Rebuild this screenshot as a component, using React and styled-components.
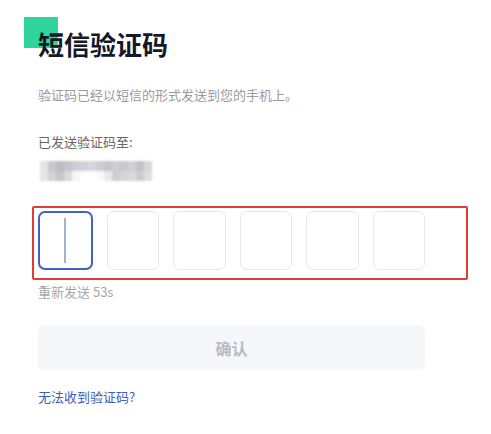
import styled, { createGlobalStyle } from 'styled-components';

const GlobalStyle = createGlobalStyle`
  body {
    margin: 0;
    background: #ffffff;
    font-family: "Noto Sans CJK SC", "Liberation Sans", sans-serif;
  }
`;

const mosaic = [
  ['#e4e4e6', '#c9c9cc', '#bdbdc1', '#c4c4c8', '#cfcfd3', '#d2d2d6', '#d6d6da', '#cdcdd1', '#c6c6ca', '#cfcfd3', '#c9c9cd', '#d0d0d4', '#c2c2c6', '#d8d8dc'],
  ['#e6e6e8', '#d3d3d6', '#c6c6ca', '#dadadd', '#f6f6f7', '#ffffff', '#ffffff', '#fafafa', '#e9e9eb', '#cfcfd3', '#d5d5d9', '#d9d9dd', '#cdcdd1', '#dedee1'],
];

function App() {
  const digits = ['', '', '', '', '', ''];

  return (
    <Page>
      <GlobalStyle />
      <TitleWrap>
        <Accent />
        <Title>短信验证码</Title>
      </TitleWrap>
      <Subtitle>验证码已经以短信的形式发送到您的手机上。</Subtitle>
      <Label>已发送验证码至:</Label>
      <Mosaic>
        {mosaic.map((row, r) =>
          row.map((c, i) => <MosaicCell key={r + '-' + i} $shade={c} />)
        )}
      </Mosaic>
      <Highlight>
        <CodeRow>
          {digits.map((d, i) => (
            <CodeBox key={i} $active={i === 0}>
              {i === 0 && <Caret />}
              {d}
            </CodeBox>
          ))}
        </CodeRow>
      </Highlight>
      <Resend>重新发送 53s</Resend>
      <ConfirmButton disabled>确认</ConfirmButton>
      <HelpLink href="#">无法收到验证码?</HelpLink>
    </Page>
  );
}

const Page = styled.div`
  display: flex;
  flex-direction: column;
  align-items: flex-start;
  padding: 26px 0 0 38px;
  width: 387px;
`;

const TitleWrap = styled.div`
  position: relative;
`;

const Accent = styled.div`
  position: absolute;
  left: -14px;
  top: -9px;
  width: 34px;
  height: 31px;
  background: #2fd59b;
`;

const Title = styled.h1`
  position: relative;
  margin: 0;
  font-size: 26px;
  line-height: 36px;
  font-weight: 700;
  color: #151826;
`;

const Subtitle = styled.p`
  margin: 23px 0 0;
  font-size: 13px;
  line-height: 20px;
  color: #9a9aa0;
`;

const Label = styled.p`
  margin: 27px 0 0;
  font-size: 13px;
  line-height: 20px;
  color: #66666c;
`;

const Mosaic = styled.div`
  display: grid;
  grid-template-columns: repeat(14, 8px);
  grid-auto-rows: 10px;
  margin: 9px 0 0 2px;
  filter: blur(1px);
`;

const MosaicCell = styled.div`
  background: ${(p) => p.$shade};
`;

const Highlight = styled.div`
  margin: 25px 0 0 -6px;
  padding: 3px 41px 8px 4px;
  border: 2px solid #e03a3a;
  border-radius: 2px;
`;

const CodeRow = styled.div`
  display: flex;
  gap: 14px;
  width: 387px;
`;

const CodeBox = styled.div`
  position: relative;
  flex: 1;
  height: 59px;
  box-sizing: border-box;
  border-radius: 7px;
  border: ${(p) => (p.$active ? '2px solid #3f62c4' : '1px solid #e6e7ec')};
  display: flex;
  align-items: center;
  justify-content: center;
`;

const Caret = styled.span`
  width: 2px;
  height: 45px;
  background: #a3b0cf;
`;

const Resend = styled.p`
  margin: 2px 0 0;
  font-size: 13px;
  line-height: 20px;
  color: #a6a6ac;
`;

const ConfirmButton = styled.button`
  margin-top: 23px;
  width: 387px;
  height: 45px;
  border: none;
  border-radius: 5px;
  background: #f6f7fa;
  color: #babbc2;
  font-family: inherit;
  font-size: 16px;
  font-weight: 600;
`;

const HelpLink = styled.a`
  margin-top: 17px;
  font-size: 13px;
  line-height: 20px;
  color: #3d5cc2;
  text-decoration: none;
`;

export default App;
